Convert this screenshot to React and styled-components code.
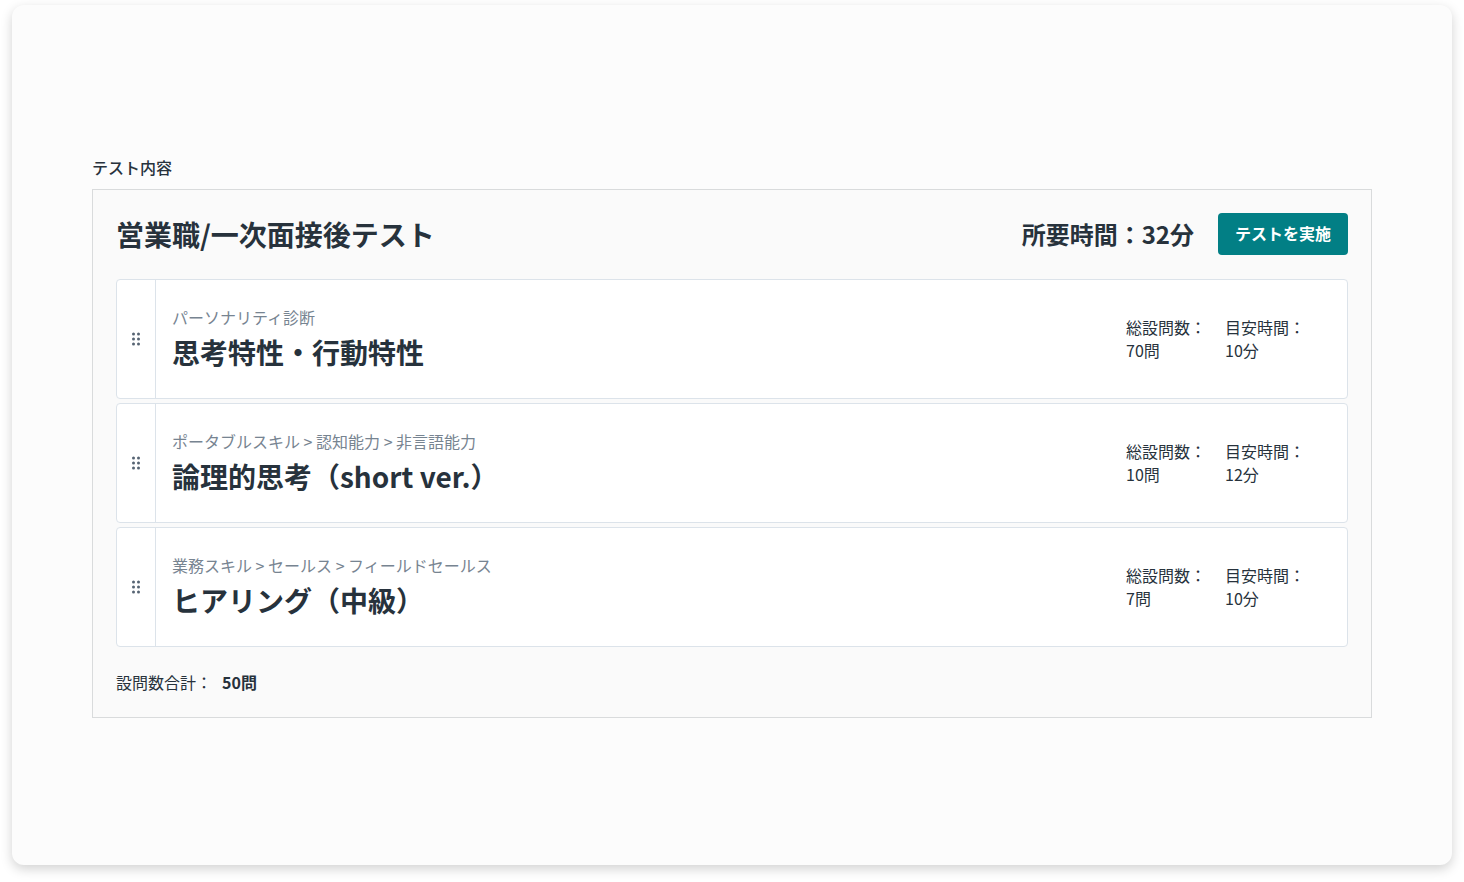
import React from "react";
import styled, { createGlobalStyle } from "styled-components";

const color = {
  ink: "#27323c",
  muted: "#778491",
  line: "#dce3ea",
  frame: "#d9dbdc",
  teal: "#027f85",
};

const GlobalStyle = createGlobalStyle`
  *, *::before, *::after { box-sizing: border-box; }
  body {
    margin: 0;
    background: #fff;
    color: ${color.ink};
    font-family: "Noto Sans CJK JP", "Noto Sans", sans-serif;
    font-size: 16px;
    line-height: 24px;
  }
  h1, h2, p, ul, dl, dt, dd { margin: 0; padding: 0; }
`;

const Page = styled.div`
  min-height: 100vh;
  padding: 5px 12px 17px;
  display: flex;
`;

const Sheet = styled.main`
  flex: 1;
  min-width: 0;
  display: flex;
  flex-direction: column;
  justify-content: center;
  padding: 82px 80px 80px;
  background: #fcfcfc;
  border-radius: 12px;
  box-shadow: 0 4px 12px rgba(0, 0, 0, 0.18);
`;

const SectionLabel = styled.p`
  font-weight: 500;
  margin-bottom: 10px;
`;

const Panel = styled.section`
  padding: 23px;
  background: #fafafa;
  border: 1px solid ${color.frame};
`;

const PanelHeader = styled.header`
  display: flex;
  align-items: center;
  gap: 24px;
  margin-bottom: 24px;
`;

const PanelTitle = styled.h1`
  flex: 1;
  font-size: 28px;
  line-height: 42px;
  font-weight: 700;
`;

const Duration = styled.p`
  font-size: 24px;
  line-height: 36px;
  font-weight: 700;
`;

const RunButton = styled.button`
  padding: 8px 17px 10px;
  border: 0;
  border-radius: 4px;
  background: ${color.teal};
  color: #fff;
  font: inherit;
  font-weight: 700;
  cursor: pointer;
`;

const TestList = styled.ul`
  display: grid;
  gap: 4px;
  list-style: none;
`;

const TestRow = styled.li`
  display: flex;
  min-height: 120px;
  background: #fff;
  border: 1px solid ${color.line};
  border-radius: 4px;
`;

const DragHandle = styled.button`
  flex: none;
  width: 39px;
  display: flex;
  align-items: center;
  justify-content: center;
  padding: 0;
  background: none;
  border: 0;
  border-right: 1px solid ${color.line};
  cursor: grab;
`;

const TestInfo = styled.div`
  flex: 1;
  display: flex;
  flex-direction: column;
  justify-content: center;
  gap: 2px;
  padding: 24px 16px;
`;

const Category = styled.p`
  color: ${color.muted};
`;

const TestTitle = styled.h2`
  font-size: 28px;
  line-height: 42px;
  font-weight: 700;
`;

const Stats = styled.dl`
  display: grid;
  grid-template-columns: 83px 83px;
  gap: 16px;
  align-content: center;
  padding-right: 39px;
  white-space: nowrap;
  line-height: 23px;
`;

const Total = styled.p`
  display: flex;
  gap: 10px;
  margin-top: 23px;
`;

const DotsIcon = () => (
  <svg width="10" height="14" viewBox="0 0 10 14" fill="#566473" aria-hidden="true">
    {[2, 7, 12].map((y) => (
      <React.Fragment key={y}>
        <circle cx="2.5" cy={y} r="1.5" />
        <circle cx="7.5" cy={y} r="1.5" />
      </React.Fragment>
    ))}
  </svg>
);

const tests = [
  { path: "パーソナリティ診断", title: "思考特性・行動特性", count: "70問", time: "10分" },
  { path: "ポータブルスキル > 認知能力 > 非言語能力", title: "論理的思考（short ver.）", count: "10問", time: "12分" },
  { path: "業務スキル > セールス > フィールドセールス", title: "ヒアリング（中級）", count: "7問", time: "10分" },
];

export default function App() {
  return (
    <>
      <GlobalStyle />
      <Page>
        <Sheet>
          <SectionLabel>テスト内容</SectionLabel>
          <Panel>
            <PanelHeader>
              <PanelTitle>営業職/一次面接後テスト</PanelTitle>
              <Duration>所要時間：32分</Duration>
              <RunButton type="button">テストを実施</RunButton>
            </PanelHeader>
            <TestList>
              {tests.map((test) => (
                <TestRow key={test.title}>
                  <DragHandle type="button">
                    <DotsIcon />
                  </DragHandle>
                  <TestInfo>
                    <Category>{test.path}</Category>
                    <TestTitle>{test.title}</TestTitle>
                  </TestInfo>
                  <Stats>
                    <div>
                      <dt>総設問数：</dt>
                      <dd>{test.count}</dd>
                    </div>
                    <div>
                      <dt>目安時間：</dt>
                      <dd>{test.time}</dd>
                    </div>
                  </Stats>
                </TestRow>
              ))}
            </TestList>
            <Total>
              <span>設問数合計：</span>
              <strong>50問</strong>
            </Total>
          </Panel>
        </Sheet>
      </Page>
    </>
  );
}
